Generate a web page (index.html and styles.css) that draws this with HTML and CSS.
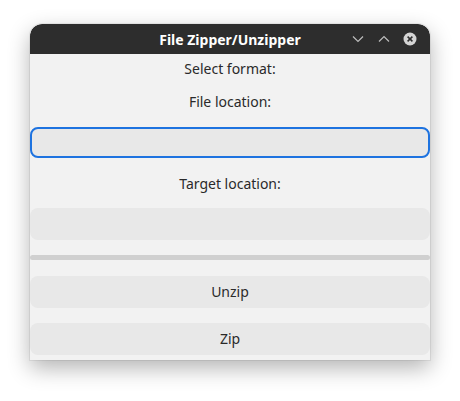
FILE: index.html
```html
<!DOCTYPE html>
<html>
<head>
<meta charset="utf-8">
<link rel="stylesheet" href="styles.css">
</head>
<body>
<div class="window">
  <div class="titlebar">
    <span class="title">File Zipper/Unzipper</span>
    <div class="controls">
      <svg class="ctl" width="14" height="10" viewBox="0 0 14 10"><path d="M2 2.5 L7 7.5 L12 2.5" fill="none" stroke="#bdbdbd" stroke-width="1.2"/></svg>
      <svg class="ctl" width="14" height="10" viewBox="0 0 14 10"><path d="M2 7.5 L7 2.5 L12 7.5" fill="none" stroke="#bdbdbd" stroke-width="1.2"/></svg>
      <svg class="ctl" width="14" height="14" viewBox="0 0 14 14"><circle cx="7" cy="7" r="6.5" fill="#d4d4d4"/><path d="M4.6 4.6 L9.4 9.4 M9.4 4.6 L4.6 9.4" stroke="#2d2d2d" stroke-width="1.5"/></svg>
    </div>
  </div>
  <div class="content">
    <div class="label l1">Select format:</div>
    <div class="label l2">File location:</div>
    <div class="entry focused"></div>
    <div class="label l3">Target location:</div>
    <div class="entry plain"></div>
    <div class="sep"></div>
    <div class="btn b1">Unzip</div>
    <div class="btn b2">Zip</div>
  </div>
</div>
</body>
</html>
```
FILE: styles.css
```css
html, body {
  margin: 0;
  padding: 0;
  background: #ffffff;
  width: 460px;
  height: 401px;
  overflow: hidden;
}
body {
  font-family: "Noto Sans", "Open Sans", sans-serif;
  font-size: 14px;
  color: #2a2a2a;
}
.window {
  margin: 24px 0 0 30px;
  width: 400px;
  height: 336px;
  border-radius: 12px 12px 0 0;
  background: #f2f2f2;
  box-shadow: 0 8px 22px rgba(0,0,0,0.3), 0 0 0 1px rgba(0,0,0,0.06);
  display: flex;
  flex-direction: column;
  overflow: hidden;
}
.titlebar {
  height: 30px;
  background: #2d2d2d;
  border-radius: 12px 12px 0 0;
  position: relative;
  display: flex;
  align-items: center;
  justify-content: center;
}
.title {
  color: #ffffff;
  font-weight: bold;
  font-size: 14px;
}
.controls {
  position: absolute;
  right: 13px;
  top: 8px;
  display: flex;
  align-items: center;
  gap: 12px;
}
.ctl { display: block; }
.content {
  flex: 1;
  display: flex;
  flex-direction: column;
}
.label {
  height: 20px;
  line-height: 20px;
  text-align: center;
}
.l1 { margin-top: 5px; }
.l2 { margin-top: 13px; }
.entry {
  height: 32px;
  box-sizing: border-box;
  border-radius: 8px;
  background: #e8e8e8;
}
.focused {
  margin-top: 15px;
  height: 31px;
  border: 2px solid #1e73e0;
}
.l3 { margin-top: 16px; }
.plain { margin-top: 14px; }
.sep {
  margin-top: 15px;
  height: 5px;
  background: #d0d0d0;
  border-radius: 3px;
}
.btn {
  height: 32px;
  line-height: 32px;
  border-radius: 8px;
  background: #e8e8e8;
  text-align: center;
}
.b1 { margin-top: 16px; }
.b2 { margin-top: 15px; }
```
